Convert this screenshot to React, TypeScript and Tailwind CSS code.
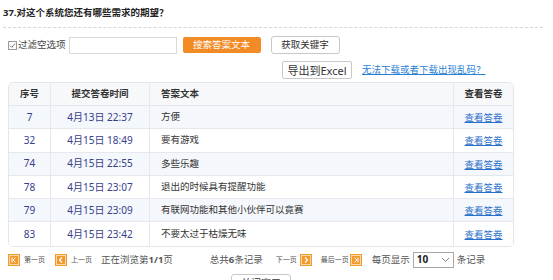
import React from "react";

type Row = { id: number; time: string; text: string };

const rows: Row[] = [
  { id: 7, time: "4月13日 22:37", text: "方便" },
  { id: 32, time: "4月15日 18:49", text: "要有游戏" },
  { id: 74, time: "4月15日 22:55", text: "多些乐趣" },
  { id: 78, time: "4月15日 23:07", text: "退出的时候具有提醒功能" },
  { id: 79, time: "4月15日 23:09", text: "有联网功能和其他小伙伴可以竟赛" },
  { id: 83, time: "4月15日 23:42", text: "不要太过于枯燥无味" },
];

const PageIcon: React.FC<{ kind: "first" | "prev" | "next" | "last" }> = ({ kind }) => (
  <svg width="12" height="12" viewBox="0 0 12 12" className="shrink-0">
    <rect x="0.5" y="0.5" width="11" height="11" fill="#fbd9a8" stroke="#f39a2e" />
    <rect x="2" y="2" width="8" height="8" fill="#f39a2e" />
    {kind === "first" && (
      <path d="M4 3.5v5M7.5 3.5L5 6l2.5 2.5" stroke="#fff" strokeWidth="1" fill="none" />
    )}
    {kind === "prev" && <path d="M7 3.5L4.5 6 7 8.5" stroke="#fff" strokeWidth="1.2" fill="none" />}
    {kind === "next" && <path d="M5 3.5L7.5 6 5 8.5" stroke="#fff" strokeWidth="1.2" fill="none" />}
    {kind === "last" && (
      <path d="M8 3.5v5M4.5 3.5L7 6 4.5 8.5" stroke="#fff" strokeWidth="1" fill="none" />
    )}
  </svg>
);

const App: React.FC = () => {
  return (
    <div className="w-[553px] h-[280px] overflow-hidden bg-white text-[9.5px] text-[#333] font-['Noto_Sans','Noto_Sans_CJK_SC',sans-serif]">
      {/* title */}
      <div className="mx-[3px] mr-[10px] h-[28px] flex items-center border-b border-dashed border-[#d6d6d6]">
        <span className="font-bold text-[#222] text-[9.5px]">37.对这个系统您还有哪些需求的期望？</span>
      </div>

      {/* filter row */}
      <div className="flex items-center h-[18px] mt-[8px] pl-[8px]">
        <span className="w-[9px] h-[9px] border border-[#9a9a9a] flex items-center justify-center">
          <svg width="7" height="7" viewBox="0 0 7 7">
            <path d="M1 3.5l1.8 1.8L6 1.5" stroke="#666" strokeWidth="0.9" fill="none" />
          </svg>
        </span>
        <span className="ml-[1px] text-[#444]">过滤空选项</span>
        <input className="ml-[3px] w-[108px] h-[17px] border border-[#d9d9d9] outline-none" />
        <button className="ml-[6px] w-[78px] h-[16px] rounded-[2px] bg-[#f28a26] text-white text-[9.5px] leading-none">
          搜索答案文本
        </button>
        <button className="ml-[10px] w-[69px] h-[18px] rounded-[3px] border border-[#c8c8c8] bg-white text-[#333] text-[9.5px] leading-none">
          获取关键字
        </button>
      </div>

      {/* export row */}
      <div className="flex items-center h-[18px] mt-[7px] pl-[282px]">
        <button className="w-[70px] h-[18px] rounded-[2px] border border-[#c8c8c8] bg-white text-[#333] text-[11px] leading-none">
          导出到Excel
        </button>
        <a className="ml-[10px] text-[#2a7fd4] underline">无法下载或者下载出现乱码？</a>
      </div>

      {/* table */}
      <div className="ml-[8px] mt-[3px] w-[506px] rounded-[5px] border border-[#e3e6ea] overflow-hidden">
        <div className="grid grid-cols-[42px_99px_304px_1fr] h-[23px] bg-[#f7f8fa] border-b border-[#e3e6ea] font-bold text-[#333]">
          <div className="flex items-center justify-center border-r border-[#e6e8eb]">序号</div>
          <div className="flex items-center justify-center border-r border-[#e6e8eb]">提交答卷时间</div>
          <div className="flex items-center pl-[11px] border-r border-[#e6e8eb]">答案文本</div>
          <div className="flex items-center justify-center">查看答卷</div>
        </div>
        {rows.map((r, i) => (
          <div
            key={r.id}
            className={`grid grid-cols-[42px_99px_304px_1fr] h-[23.3px] ${
              i < rows.length - 1 ? "border-b border-[#e6e8eb]" : ""
            } ${i % 2 === 0 ? "bg-[#f4f7fb]" : "bg-white"}`}
          >
            <div className="flex items-center justify-center border-r border-[#e6e8eb] text-[#35408a] text-[10px]">
              {r.id}
            </div>
            <div className="flex items-center justify-center border-r border-[#e6e8eb] text-[#35408a] text-[10px]">
              {r.time}
            </div>
            <div className="flex items-center pl-[11px] border-r border-[#e6e8eb] text-[#333]">{r.text}</div>
            <div className="flex items-center justify-center pt-[2px]">
              <a className="text-[#2a6fc9] underline">查看答卷</a>
            </div>
          </div>
        ))}
      </div>

      {/* pagination */}
      <div className="flex items-center h-[16px] mt-[5px] pl-[8px] text-[#555]">
        <PageIcon kind="first" />
        <span className="ml-[4px] text-[7px]">第一页</span>
        <span className="ml-[10px]">
          <PageIcon kind="prev" />
        </span>
        <span className="ml-[4px] text-[7px]">上一页</span>
        <span className="ml-[9px] text-[9.5px]">
          正在浏览第<b className="font-bold">1/1</b>页
        </span>
        <span className="ml-[37px] text-[9.5px]">
          总共<b className="font-bold">6</b>条记录
        </span>
        <span className="ml-[13px] text-[7px]">下一页</span>
        <span className="ml-[3px]">
          <PageIcon kind="next" />
        </span>
        <span className="ml-[9px] text-[7px]">最后一页</span>
        <span className="ml-[1px]">
          <PageIcon kind="last" />
        </span>
        <span className="ml-[10px] text-[9.5px]">每页显示</span>
        <div className="ml-[3px] w-[41px] h-[16px] border border-[#a8a8a8] flex items-center justify-between px-[3px]">
          <span className="font-bold text-[#222] text-[10px]">10</span>
          <svg width="9" height="6" viewBox="0 0 9 6">
            <path d="M1 1l3.5 3.5L8 1" stroke="#777" strokeWidth="0.9" fill="none" />
          </svg>
        </div>
        <span className="ml-[3px] text-[9.5px]">条记录</span>
      </div>

      {/* close button */}
      <div className="flex justify-start pl-[231px] mt-[6px]">
        <button className="w-[60px] h-[18px] rounded-[3px] border border-[#c8c8c8] bg-white text-[#333] text-[10px] leading-none">
          关闭窗口
        </button>
      </div>
    </div>
  );
};

export default App;
